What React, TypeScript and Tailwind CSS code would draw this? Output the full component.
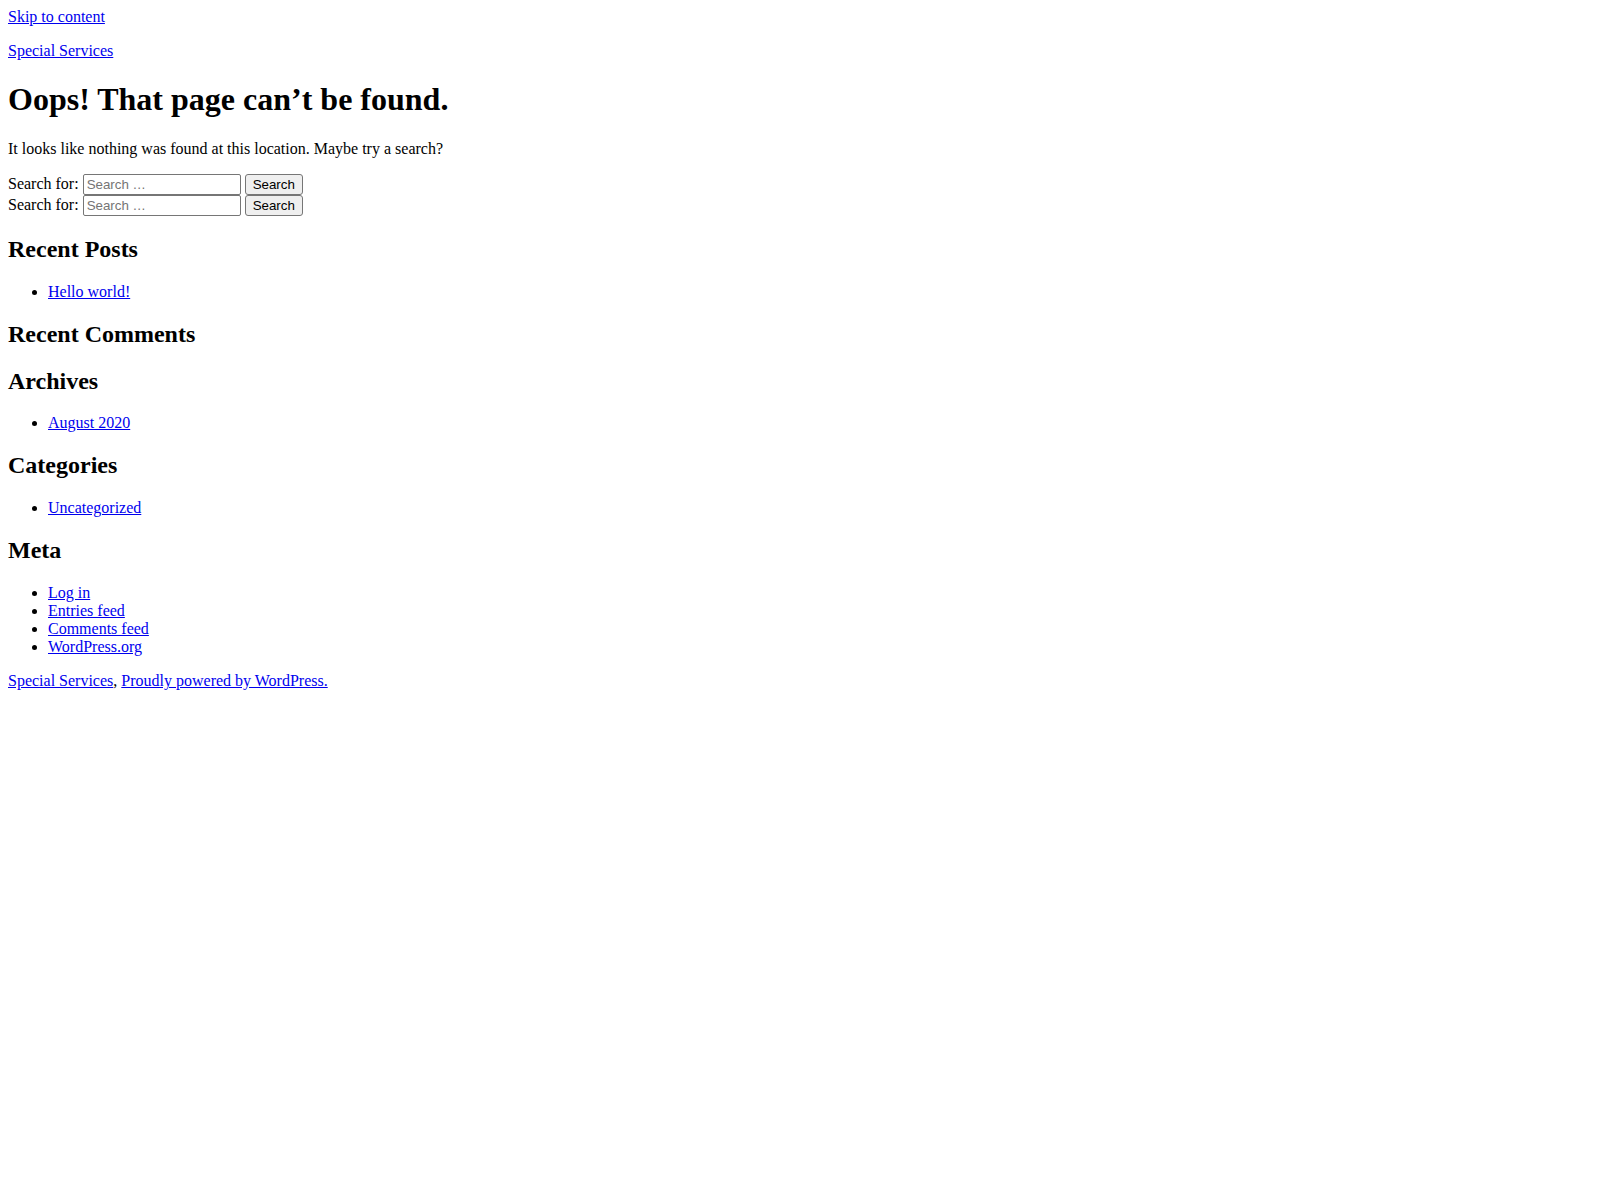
import React from 'react';

const SearchForm = () => (
  <form className="block" onSubmit={(e) => e.preventDefault()}>
    <label>
      <span>Search for:</span>{' '}
      <input
        type="search"
        placeholder="Search …"
        className="w-[158px] h-[21px] align-baseline bg-white border border-[#767676] rounded-[2px] px-[3px] py-[1px] font-['Liberation_Sans',Arial,sans-serif] text-[13.333px] text-black placeholder:text-[#757575] leading-[normal]"
      />
    </label>{' '}
    <input
      type="submit"
      value="Search"
      className="h-[21px] align-baseline bg-[#efefef] border border-[#767676] rounded-[3px] px-[7px] py-[1px] font-['Liberation_Sans',Arial,sans-serif] text-[13.333px] text-black leading-[normal]"
    />
  </form>
);

const Widget = ({ title, items }: { title: string; items: string[] }) => (
  <section>
    <h2 className="text-[24px] leading-[normal] font-bold my-[19.92px]">{title}</h2>
    <ul className="list-disc pl-10 my-4">
      {items.map((item) => (
        <li key={item}>
          <a href="#" className="text-[#0000ee] underline">{item}</a>
        </li>
      ))}
    </ul>
  </section>
);

const App = () => {
  const widgets = [
    { title: "Recent Posts", items: ["Hello world!"] },
    { title: "Recent Comments", items: [] },
    { title: "Archives", items: ["August 2020"] },
    { title: "Categories", items: ["Uncategorized"] },
    { title: "Meta", items: ["Log in", "Entries feed", "Comments feed", "WordPress.org"] }
  ];

  return (
    <div className="min-h-[1200px] bg-white p-2 font-['Liberation_Serif','Times_New_Roman',serif] text-[16px] leading-[normal] text-black">
      <div>
        <a href="#content" className="text-[#0000ee] underline">Skip to content</a>

        <header>
          <p className="my-4">
            <a href="#" className="text-[#0000ee] underline">Special Services</a>
          </p>
        </header>

        <main id="content">
          <section>
            <header>
              <h1 className="text-[32px] leading-[normal] font-bold my-[21.44px]">Oops! That page can’t be found.</h1>
            </header>
            <div>
              <p className="my-4">It looks like nothing was found at this location. Maybe try a search?</p>
              <SearchForm />
              <SearchForm />
              {widgets.map((w) => (
                <Widget key={w.title} title={w.title} items={w.items} />
              ))}
            </div>
          </section>
        </main>

        <footer>
          <div>
            <a href="#" className="text-[#0000ee] underline">Special Services</a>,{' '}
            <a href="#" className="text-[#0000ee] underline">Proudly powered by WordPress.</a>
          </div>
        </footer>
      </div>
    </div>
  );
};

export default App;
